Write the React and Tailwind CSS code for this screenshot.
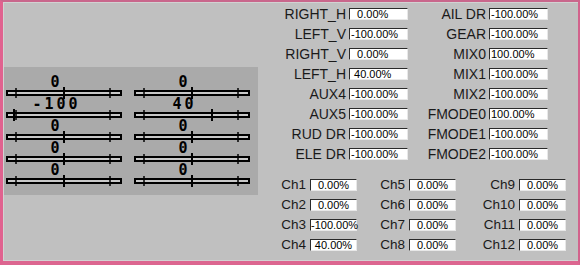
import React from 'react';

const SLIDERS = [
  [0, 0],
  [-100, 40],
  [0, 0],
  [0, 0],
  [0, 0],
];

const LEFT_FIELDS = [
  ['RIGHT_H', '  0.00%'],
  ['LEFT_V', '-100.00%'],
  ['RIGHT_V', '  0.00%'],
  ['LEFT_H', ' 40.00%'],
  ['AUX4', '-100.00%'],
  ['AUX5', '-100.00%'],
  ['RUD DR', '-100.00%'],
  ['ELE DR', '-100.00%'],
];

const RIGHT_FIELDS = [
  ['AIL DR', '-100.00%'],
  ['GEAR', '-100.00%'],
  ['MIX0', '100.00%'],
  ['MIX1', '-100.00%'],
  ['MIX2', '-100.00%'],
  ['FMODE0', '100.00%'],
  ['FMODE1', '-100.00%'],
  ['FMODE2', '-100.00%'],
];

const CHANNELS = [
  ['0.00%', '0.00%', '0.00%'],
  ['0.00%', '0.00%', '0.00%'],
  ['-100.00%', '0.00%', '0.00%'],
  ['40.00%', '0.00%', '0.00%'],
];

function Slider({ value }) {
  const pos = 58 + value * 0.5;
  return (
    <div className="flex flex-col w-[116px]">
      <div className="h-[10px] w-[101px] text-center font-['DejaVu_Sans_Mono',monospace] text-[15px] font-bold leading-[10px] tracking-[3px] text-black">
        {value}
      </div>
      <svg width="116" height="12" viewBox="0 0 116 12" className="block">
        <rect x="1" y="4" width="114" height="4" fill="#c8c8c8" stroke="#000" strokeWidth="2" />
        <line x1="10" y1="1" x2="10" y2="11" stroke="#000" strokeWidth="1.5" />
        <line x1="104" y1="1" x2="104" y2="11" stroke="#000" strokeWidth="1.5" />
        <line x1={pos} y1="0" x2={pos} y2="12" stroke="#000" strokeWidth="2" />
      </svg>
    </div>
  );
}

function Box({ value, w, center }) {
  return (
    <div
      className={`${w} h-[12px] bg-white border-t border-l border-t-[#2a2a2a] border-l-[#2a2a2a] border-b border-r border-b-[#e8e8e8] border-r-[#e8e8e8] whitespace-pre text-[11px] leading-[11px] text-black font-['Liberation_Sans',Arial,sans-serif] ${center ? 'text-center' : 'pl-[1px]'}`}
    >
      {value}
    </div>
  );
}

export default function App() {
  return (
    <div className="w-[580px] h-[265px] bg-[#c0c0c0] border-l-[3px] border-t-2 border-r-2 border-b-4 border-l-[#e0628f] border-t-[#c9678c] border-r-[#d2628c] border-b-[#dc6690] font-['Liberation_Sans',Arial,sans-serif] text-[#1a1a1a]">
      <div className="w-full h-full flex border-t border-b border-l border-[#d2d2d2]">
        <div className="w-[277px] shrink-0 pt-[64px]">
          <div className="w-[254px] bg-[#aaaaaa] pt-[10px] pb-[8px] pl-[2px] flex flex-col">
            {SLIDERS.map((row, i) => (
              <div key={i} className="flex gap-[12px]">
                <Slider value={row[0]} />
                <Slider value={row[1]} />
              </div>
            ))}
          </div>
        </div>

        <div className="flex-1 flex flex-col pt-[1px]">
          <div className="grid grid-cols-[68px_59px_81px_59px]">
            {LEFT_FIELDS.map((f, i) => (
              <React.Fragment key={f[0]}>
                <div className="h-[20px] flex items-center justify-end pr-[3px] text-[14px] whitespace-nowrap">{f[0]}</div>
                <div className="h-[20px] flex items-center"><Box value={f[1]} w="w-[59px]" /></div>
                <div className="h-[20px] flex items-center justify-end pr-[3px] text-[14px] whitespace-nowrap">{RIGHT_FIELDS[i][0]}</div>
                <div className="h-[20px] flex items-center"><Box value={RIGHT_FIELDS[i][1]} w="w-[59px]" /></div>
              </React.Fragment>
            ))}
          </div>

          <div className="grid grid-cols-[29px_47px_52px_48px_62px_48px] mt-[11px]">
            {CHANNELS.map((row, r) => (
              <React.Fragment key={r}>
                {row.map((v, c) => (
                  <React.Fragment key={c}>
                    <div className="h-[20px] flex items-center justify-end pr-[4px] text-[13.5px] whitespace-nowrap">
                      Ch{r + 1 + c * 4}
                    </div>
                    <div className="h-[20px] flex items-center"><Box value={v} w="w-[47px]" center /></div>
                  </React.Fragment>
                ))}
              </React.Fragment>
            ))}
          </div>
        </div>
      </div>
    </div>
  );
}
